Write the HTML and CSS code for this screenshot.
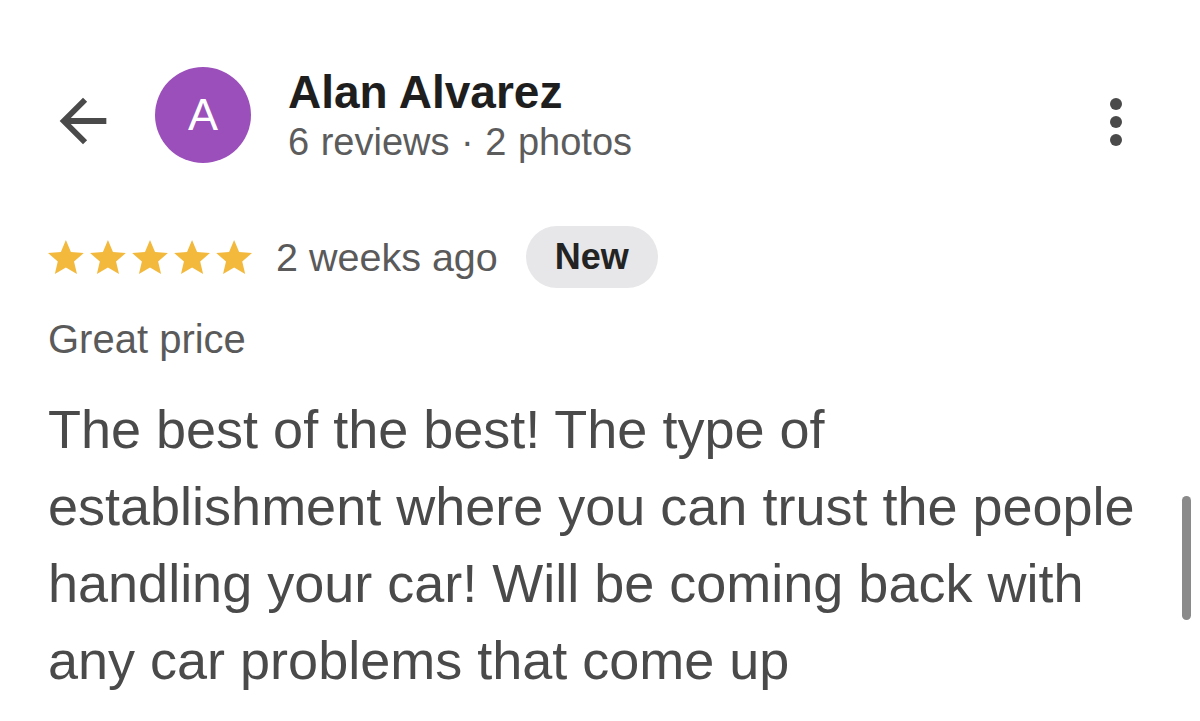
FILE: index.html
```html
<!DOCTYPE html>
<html lang="en">
<head>
<meta charset="utf-8">
<title>Review</title>
<link rel="stylesheet" href="styles.css">
</head>
<body>
<div class="page">
  <header class="header">
    <svg class="back" viewBox="0 0 24 24" aria-hidden="true"><path d="M20 11H7.83l5.59-5.59L12 4l-8 8 8 8 1.41-1.41L7.83 13H20v-2z"/></svg>
    <div class="avatar">A</div>
    <div class="who">
      <div class="name">Alan Alvarez</div>
      <div class="meta">6 reviews · 2 photos</div>
    </div>
    <svg class="more" viewBox="0 0 24 24" aria-hidden="true"><circle cx="12" cy="6" r="2"/><circle cx="12" cy="12" r="2"/><circle cx="12" cy="18" r="2"/></svg>
  </header>

  <div class="rating">
    <svg class="stars" viewBox="2 2 114 19.5" aria-hidden="true">
      <defs><path id="st" d="M12 17.27L18.18 21l-1.64-7.03L22 9.24l-7.19-.61L12 2 9.19 8.63 2 9.24l5.46 4.73L5.82 21z"/></defs>
      <use href="#st"/>
      <use href="#st" transform="translate(23.5 0)"/>
      <use href="#st" transform="translate(47 0)"/>
      <use href="#st" transform="translate(70.5 0)"/>
      <use href="#st" transform="translate(94 0)"/>
    </svg>
    <span class="when">2 weeks ago</span>
    <span class="pill">New</span>
  </div>

  <div class="tag">Great price</div>

  <p class="body">The best of the best! The type of establishment where you can trust the people handling your car! Will be coming back with any car problems that come up</p>
</div>
<div class="scrollbar"></div>
</body>
</html>
```

FILE: styles.css
```css
html, body {
  margin: 0;
  padding: 0;
  background: #ffffff;
}
body {
  font-family: "Liberation Sans", Arial, Helvetica, sans-serif;
  width: 1200px;
  height: 721px;
  overflow: hidden;
  position: relative;
}
.page {
  padding: 0 48px;
}
.header {
  display: flex;
  align-items: flex-start;
  padding-top: 66px;
}
.back {
  width: 70px;
  height: 70px;
  margin-top: 20px;
  fill: #4a4a4a;
  flex: none;
}
.avatar {
  width: 96px;
  height: 96px;
  margin-top: 1px;
  margin-left: 37px;
  border-radius: 50%;
  background: #9b4fbb;
  color: #ffffff;
  font-size: 45px;
  line-height: 96px;
  text-align: center;
  flex: none;
}
.who {
  margin-left: 37px;
  display: flex;
  flex-direction: column;
}
.name {
  font-size: 46px;
  line-height: 52px;
  font-weight: 700;
  color: #1e1e1e;
}
.meta {
  margin-top: 2px;
  font-size: 38px;
  line-height: 44px;
  color: #5c5c5c;
  word-spacing: 1px;
}
.more {
  margin-left: auto;
  margin-top: 20px;
  width: 72px;
  height: 72px;
  fill: #4a4a4a;
  flex: none;
}
.rating {
  display: flex;
  align-items: center;
  margin-top: 62px;
  height: 62px;
}
.stars {
  width: 204px;
  height: 35px;
  fill: #f2b93d;
  flex: none;
}
.when {
  margin-left: 24px;
  font-size: 39.5px;
  color: #5a5a5a;
}
.pill {
  margin-left: 28px;
  height: 62px;
  line-height: 62px;
  padding: 0 29px;
  border-radius: 31px;
  background: #e7e7e9;
  color: #232323;
  font-size: 36px;
  font-weight: 700;
}
.tag {
  margin-top: 28px;
  font-size: 40px;
  line-height: 46px;
  color: #5a5a5a;
}
.body {
  margin: 29px 0 0;
  max-width: 1095px;
  font-size: 54px;
  line-height: 77px;
  color: #4a4a4a;
}
.scrollbar {
  position: absolute;
  left: 1182px;
  top: 496px;
  width: 9px;
  height: 124px;
  border-radius: 5px;
  background: #8a8a8a;
}
```
